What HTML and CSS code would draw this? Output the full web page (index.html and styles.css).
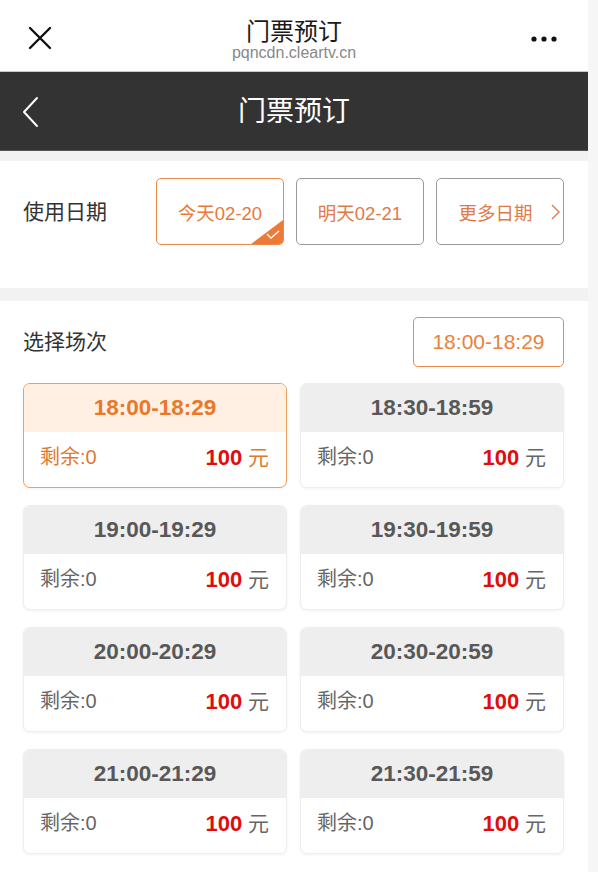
FILE: index.html
```html
<!DOCTYPE html>
<html lang="zh-CN">
<head>
<meta charset="utf-8">
<title>门票预订</title>
<link rel="stylesheet" href="styles.css">
</head>
<body>
<div class="page">
  <header class="wx-bar">
    <svg class="wx-close" width="26" height="26" viewBox="0 0 26 26"><path d="M3 3 L23 23 M23 3 L3 23" stroke="#111" stroke-width="2.4" stroke-linecap="round" fill="none"/></svg>
    <div class="wx-title">
      <div class="wx-name">门票预订</div>
      <div class="wx-url">pqncdn.cleartv.cn</div>
    </div>
    <svg class="wx-more" width="28" height="8" viewBox="0 0 28 8"><circle cx="4" cy="4" r="2.6" fill="#111"/><circle cx="14" cy="4" r="2.6" fill="#111"/><circle cx="24" cy="4" r="2.6" fill="#111"/></svg>
  </header>

  <div class="nav-bar">
    <svg class="nav-back" width="18" height="32" viewBox="0 0 18 32"><path d="M15 2 L2 16 L15 30" stroke="#fff" stroke-width="2" fill="none" stroke-linecap="round" stroke-linejoin="round"/></svg>
    <div class="nav-title">门票预订</div>
  </div>

  <section class="date-sec">
    <div class="sec-label">使用日期</div>
    <div class="date-list">
      <div class="date-btn active">今天02-20
        <span class="corner"><svg width="14" height="10" viewBox="0 0 14 10"><path d="M1 4 L5 8 L13 1" stroke="#fff" stroke-width="1.4" fill="none"/></svg></span>
      </div>
      <div class="date-btn">明天02-21</div>
      <div class="date-btn more">更多日期<svg class="more-arrow" width="9" height="16" viewBox="0 0 9 16"><path d="M1 1 L8 8 L1 15" stroke="#e07a4a" stroke-width="1.4" fill="none"/></svg></div>
    </div>
  </section>

  <section class="session-sec">
    <div class="session-head">
      <div class="sec-label">选择场次</div>
      <div class="time-pill">18:00-18:29</div>
    </div>
    <div class="grid">
      <div class="card active">
        <div class="card-time">18:00-18:29</div>
        <div class="card-body"><span class="left">剩余:0</span><span class="price"><b>100</b> 元</span></div>
      </div>
      <div class="card">
        <div class="card-time">18:30-18:59</div>
        <div class="card-body"><span class="left">剩余:0</span><span class="price"><b>100</b> 元</span></div>
      </div>
      <div class="card">
        <div class="card-time">19:00-19:29</div>
        <div class="card-body"><span class="left">剩余:0</span><span class="price"><b>100</b> 元</span></div>
      </div>
      <div class="card">
        <div class="card-time">19:30-19:59</div>
        <div class="card-body"><span class="left">剩余:0</span><span class="price"><b>100</b> 元</span></div>
      </div>
      <div class="card">
        <div class="card-time">20:00-20:29</div>
        <div class="card-body"><span class="left">剩余:0</span><span class="price"><b>100</b> 元</span></div>
      </div>
      <div class="card">
        <div class="card-time">20:30-20:59</div>
        <div class="card-body"><span class="left">剩余:0</span><span class="price"><b>100</b> 元</span></div>
      </div>
      <div class="card">
        <div class="card-time">21:00-21:29</div>
        <div class="card-body"><span class="left">剩余:0</span><span class="price"><b>100</b> 元</span></div>
      </div>
      <div class="card">
        <div class="card-time">21:30-21:59</div>
        <div class="card-body"><span class="left">剩余:0</span><span class="price"><b>100</b> 元</span></div>
      </div>
    </div>
  </section>
</div>
</body>
</html>
```

FILE: styles.css
```css
* { box-sizing: border-box; }
html, body {
  margin: 0;
  padding: 0;
  background: #f6f6f6;
}
body {
  font-family: "Liberation Sans", "Noto Sans CJK SC", sans-serif;
  color: #333;
}
.page {
  width: 588px;
  height: 872px;
  overflow: hidden;
  background: #f2f2f2;
}

/* WeChat top bar */
.wx-bar {
  height: 72px;
  background: #fff;
  border-bottom: 1px solid #c8c8c8;
  display: flex;
  align-items: center;
  justify-content: space-between;
  padding: 0 30px 0 27px;
  position: relative;
}
.wx-close { margin-top: 4px; }
.wx-more { margin-top: 6px; }
.wx-title {
  position: absolute;
  left: 0;
  right: 0;
  top: 18px;
  text-align: center;
  pointer-events: none;
}
.wx-name {
  font-size: 24px;
  line-height: 28px;
  color: #1a1a1a;
}
.wx-url {
  font-size: 16px;
  line-height: 20px;
  color: #888;
  margin-top: -3px;
}

/* dark nav bar */
.nav-bar {
  height: 79px;
  background: #333;
  border-bottom: 1px solid #555;
  display: flex;
  align-items: center;
  position: relative;
  padding-left: 22px;
}
.nav-back { margin-top: 1px; }
.nav-title {
  position: absolute;
  left: 0;
  right: 0;
  text-align: center;
  color: #fff;
  font-size: 28px;
  line-height: 79px;
}

/* date section */
.date-sec {
  margin-top: 10px;
  background: #fff;
  height: 127px;
  padding: 17px 24px 0 23px;
  display: flex;
  align-items: flex-start;
}
.sec-label {
  font-size: 21px;
  color: #333;
  line-height: 67px;
}
.date-sec .sec-label { width: 134px; }
.date-list {
  display: flex;
  gap: 12px;
}
.date-btn {
  width: 128px;
  height: 67px;
  border: 1.5px solid #9a9a9a;
  border-radius: 5px;
  font-size: 18.5px;
  color: #e07a4a;
  display: flex;
  align-items: center;
  justify-content: center;
  position: relative;
  overflow: hidden;
}
.date-btn.active {
  border-color: #ee8a48;
  color: #e8793a;
}
.date-btn.more { gap: 18px; padding-left: 18px; }
.more-arrow { margin-top: 1px; }
.corner {
  position: absolute;
  right: 0;
  bottom: 0;
  width: 32px;
  height: 24px;
  background: #ee7a38;
  clip-path: polygon(100% 0, 100% 100%, 0 100%);
}
.corner svg {
  position: absolute;
  right: 3px;
  bottom: 4px;
}

/* session section */
.session-sec {
  margin-top: 13px;
  background: #fff;
  padding: 16px 24px 40px 23px;
}
.session-head {
  display: flex;
  justify-content: space-between;
  align-items: center;
  height: 50px;
}
.session-head .sec-label { line-height: 50px; }
.time-pill {
  width: 151px;
  height: 50px;
  border: 1.5px solid #ee8a48;
  border-radius: 5px;
  color: #e8823e;
  font-size: 21px;
  display: flex;
  align-items: center;
  justify-content: center;
}
.grid {
  margin-top: 16px;
  display: grid;
  grid-template-columns: 264px 264px;
  column-gap: 13px;
  row-gap: 17px;
}
.card {
  height: 105px;
  border-radius: 7px;
  border: 1px solid #eeeeee;
  box-shadow: 0 1px 3px rgba(0,0,0,0.06);
  overflow: hidden;
  background: #fff;
}
.card-time {
  height: 48px;
  background: #eeeeee;
  color: #585858;
  font-weight: bold;
  font-size: 22.5px;
  display: flex;
  align-items: center;
  justify-content: center;
}
.card-body {
  height: 55px;
  display: flex;
  align-items: center;
  justify-content: space-between;
  padding: 0 17px 8px 16px;
  font-size: 20px;
  color: #666;
}
.price { color: #666; font-size: 21px; }
.price b { color: #e00d0d; font-size: 22px; }
.card.active {
  border: 1.5px solid #eea060;
}
.card.active .card-time {
  background: #fff0e3;
  color: #e8782a;
}
.card.active .card-body .left { color: #dd7a30; }
.card.active .price { color: #dd7a30; }
```
